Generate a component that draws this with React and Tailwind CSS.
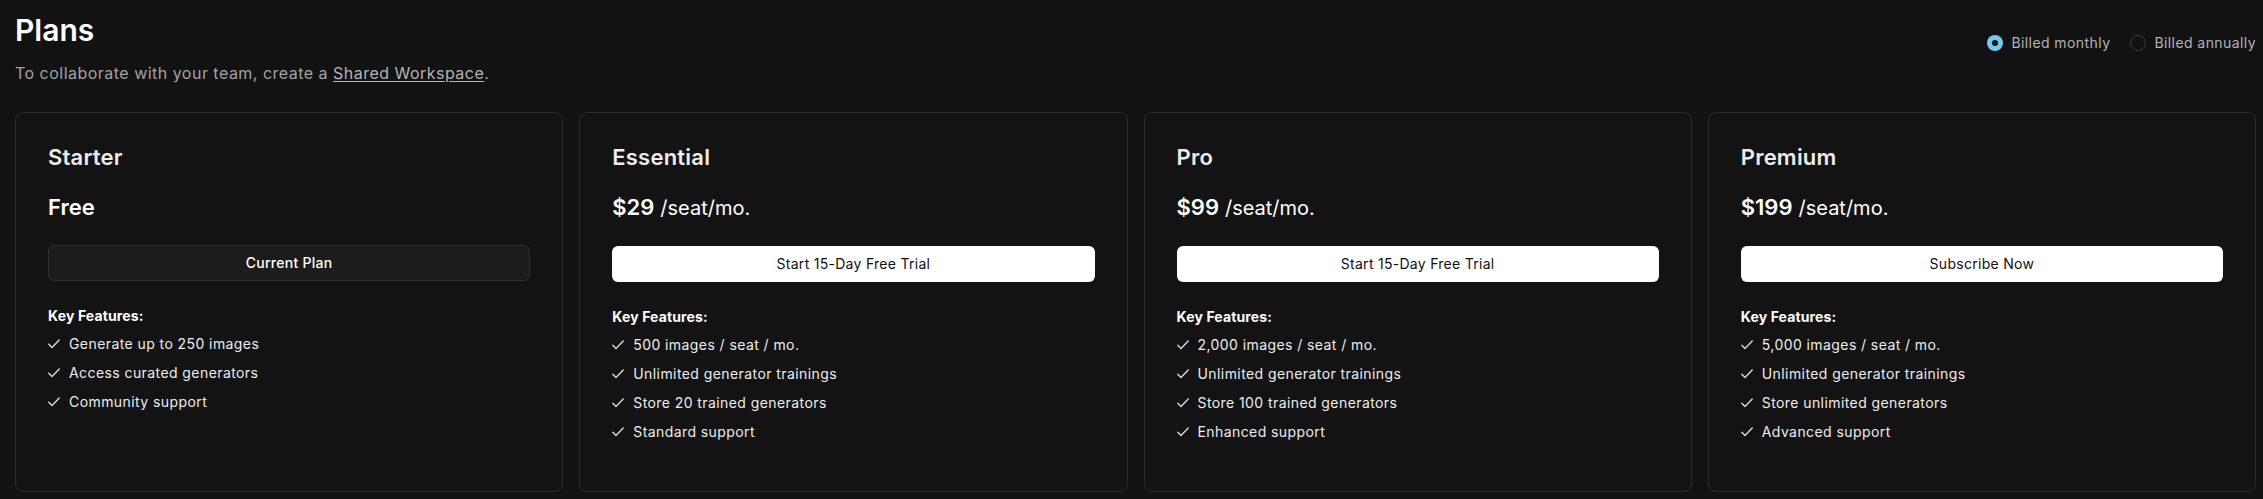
import React from "react";

const plans = [
  {
    name: "Starter",
    price: "Free",
    unit: null,
    cta: "Current Plan",
    current: true,
    features: ["Generate up to 250 images", "Access curated generators", "Community support"],
  },
  {
    name: "Essential",
    price: "$29",
    unit: "/seat/mo.",
    cta: "Start 15-Day Free Trial",
    features: ["500 images / seat / mo.", "Unlimited generator trainings", "Store 20 trained generators", "Standard support"],
  },
  {
    name: "Pro",
    price: "$99",
    unit: "/seat/mo.",
    cta: "Start 15-Day Free Trial",
    features: ["2,000 images / seat / mo.", "Unlimited generator trainings", "Store 100 trained generators", "Enhanced support"],
  },
  {
    name: "Premium",
    price: "$199",
    unit: "/seat/mo.",
    cta: "Subscribe Now",
    features: ["5,000 images / seat / mo.", "Unlimited generator trainings", "Store unlimited generators", "Advanced support"],
  },
];

function CheckIcon() {
  return (
    <svg width="12" height="10" viewBox="0 0 12 10" fill="none" className="shrink-0">
      <path d="M0.8 5.2 L4 8.6 L11.2 1" stroke="#d8d8d8" strokeWidth="1.4" strokeLinecap="round" strokeLinejoin="round" />
    </svg>
  );
}

function PlanCard({ plan }) {
  return (
    <div className="rounded-lg border border-[#2c2c2c] bg-[#131313] px-8 pt-[30px] pb-[49px]">
      <h2 className="text-[22px] leading-[28px] font-semibold tracking-[0.01em] text-[#ececec]">{plan.name}</h2>
      <div className="mt-[22px] flex items-baseline leading-[28px] text-white">
        <span className="text-[22px] font-semibold">{plan.price}</span>
        {plan.unit && <span className="ml-[6px] text-[20px] font-normal">{plan.unit}</span>}
      </div>
      {plan.current ? (
        <button className="mt-6 flex h-9 w-full items-center justify-center rounded-md border border-[#303030] bg-[#1c1c1c] text-sm font-medium tracking-[0.02em] text-white">
          {plan.cta}
        </button>
      ) : (
        <button className="mt-6 flex h-9 w-full items-center justify-center rounded-md bg-white text-sm font-normal tracking-[0.02em] text-[#111111]">
          {plan.cta}
        </button>
      )}
      <div className="mt-[25px] text-sm leading-5 font-bold tracking-[0.01em] text-white">Key Features:</div>
      <ul className="mt-2 flex flex-col gap-[9px]">
        {plan.features.map((f) => (
          <li key={f} className="flex items-center gap-[9px] text-sm leading-5 tracking-[0.03em] text-[#ededed]">
            <CheckIcon />
            <span>{f}</span>
          </li>
        ))}
      </ul>
    </div>
  );
}

export default function App() {
  return (
    <div
      className="min-h-[499px] bg-[#121212] pt-3 pl-[15px] pr-[7px]"
      style={{ fontFamily: "Inter, 'Open Sans', sans-serif" }}
    >
      <div className="flex items-start justify-between">
        <div>
          <h1 className="text-[30px] leading-9 font-semibold text-white">Plans</h1>
          <p className="mt-[13px] text-base leading-6 tracking-[0.03em] text-[#a3a3a3]">
            To collaborate with your team, create a{" "}
            <a className="underline underline-offset-2 text-[#b4b4b4]">Shared Workspace</a>.
          </p>
        </div>
        <div className="mt-[21px] flex items-center gap-5">
          <label className="flex items-center gap-2 text-sm leading-5 tracking-[0.03em] text-[#b0b4b8]">
            <span className="flex h-4 w-4 items-center justify-center rounded-full bg-[#74c7f3]">
              <span className="h-[6px] w-[6px] rounded-full bg-[#121212]" />
            </span>
            Billed monthly
          </label>
          <label className="flex items-center gap-2 text-sm leading-5 tracking-[0.03em] text-[#b0b4b8]">
            <span className="h-4 w-4 rounded-full border-[1.5px] border-[#3a3a3a]" />
            Billed annually
          </label>
        </div>
      </div>
      <div className="mt-[27px] grid grid-cols-4 gap-4">
        {plans.map((p) => (
          <PlanCard key={p.name} plan={p} />
        ))}
      </div>
    </div>
  );
}
